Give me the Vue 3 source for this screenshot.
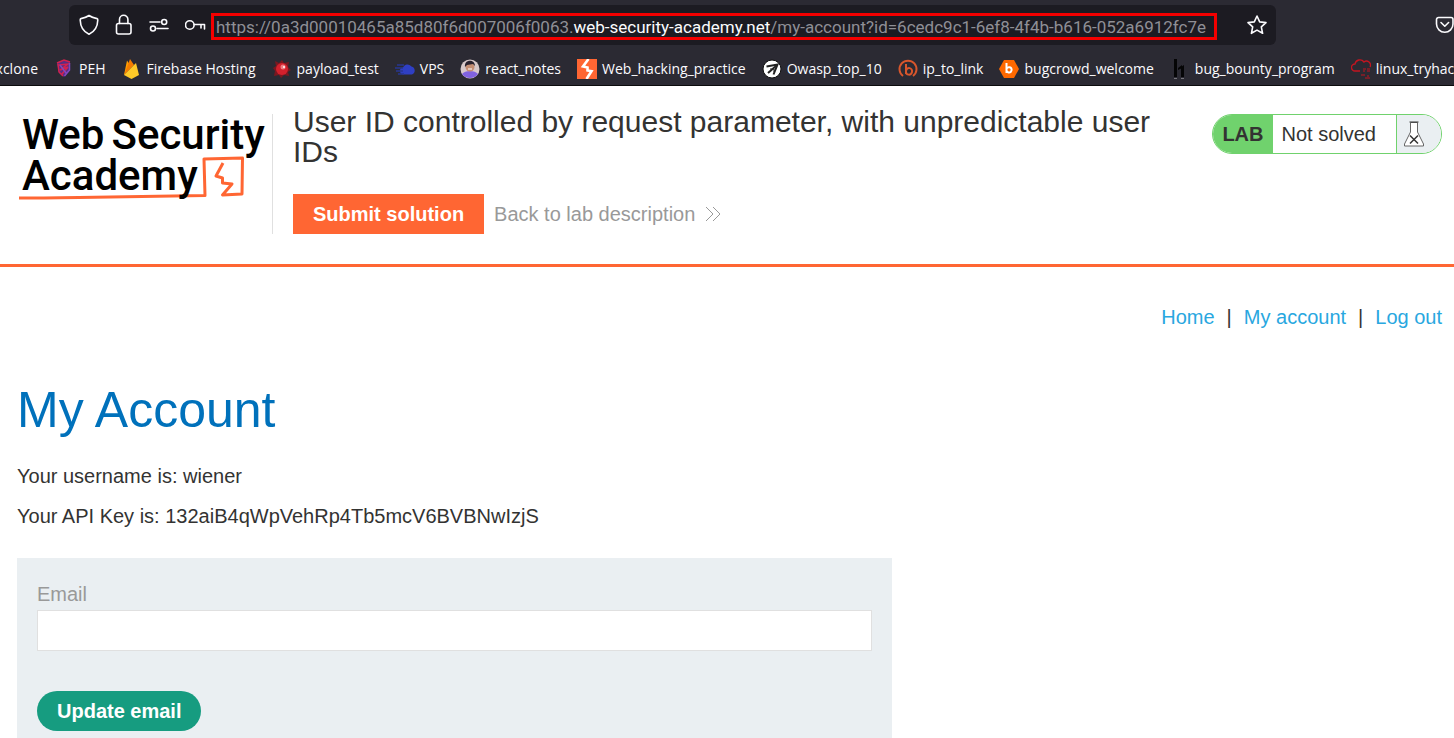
<script setup>
import { ref } from 'vue'

const email = ref('')

const bookmarks = [
  { icon: 'peh', label: 'PEH' },
  { icon: 'firebase', label: 'Firebase Hosting' },
  { icon: 'virus', label: 'payload_test' },
  { icon: 'cloud', label: 'VPS' },
  { icon: 'avatar', label: 'react_notes' },
  { icon: 'burp', label: 'Web_hacking_practice' },
  { icon: 'owasp', label: 'Owasp_top_10' },
  { icon: 'bitly', label: 'ip_to_link' },
  { icon: 'bugcrowd', label: 'bugcrowd_welcome' },
  { icon: 'hackerone', label: 'bug_bounty_program' },
  { icon: 'thm', label: 'linux_tryhackme' }
]
</script>

<template>
  <div class="window">
    <div class="chrome">
      <div class="toolbar">
        <div class="urlbar">
          <button class="tool" aria-label="Tracking protection">
            <svg width="20" height="22" viewBox="0 0 20 22"><path d="M10 1.5 C7.500 3.300 4.500 4.200 2 4.600 C1.300 4.800 1.200 5.200 1.200 6 C1.400 12.500 4 17.500 10 20.300 C16 17.500 18.600 12.500 18.800 6 C18.800 5.200 18.700 4.800 18 4.600 C15.500 4.200 12.500 3.300 10 1.500Z" /></svg>
          </button>
          <button class="tool" aria-label="Site security">
            <svg width="18" height="22" viewBox="0 0 18 22"><rect x="1.500" y="9.500" width="14.500" height="10.500" rx="2" /><path d="M4.500 9.500V5.500a4.200 4.200 0 0 1 8.400 0v4" /></svg>
          </button>
          <button class="tool" aria-label="Permissions">
            <svg width="20" height="14" viewBox="0 0 20 14"><path d="M1 4h10M8 10.500h11" /><circle cx="15.200" cy="4" r="2.500" /><circle cx="4" cy="10.500" r="2.500" /></svg>
          </button>
          <button class="tool" aria-label="Saved logins">
            <svg width="22" height="12" viewBox="0 0 22 12"><circle cx="4.800" cy="6" r="4.300" /><path d="M9.200 5.500h10.300v4.500M16 5.500v3.500" /></svg>
          </button>
          <div class="address" role="textbox" aria-label="Address">https://0a3d00010465a85d80f6d007006f0063.<span class="host">web-security-academy.net</span>/my-account?id=6cedc9c1-6ef8-4f4b-b616-052a6912fc7e</div>
          <button class="tool star" aria-label="Bookmark this page">
            <svg width="22" height="22" viewBox="0 0 22 22"><path d="M11 2l2.700 5.900 6.300.7-4.700 4.300 1.300 6.400L11 16.100l-5.600 3.200 1.300-6.400L2 8.600l6.300-.7z" /></svg>
          </button>
        </div>
        <button class="tool pocket" aria-label="Save to Pocket">
          <svg width="20" height="20" viewBox="0 0 20 20"><path d="M3.500 2.500h12.500a2 2 0 0 1 2 2v4.500a8.200 8.200 0 0 1-16.500 0V4.500a2 2 0 0 1 2-2z" /><path d="M6 7.500l3.800 3.700 3.800-3.700" /></svg>
        </button>
      </div>

      <nav class="bookmarks" aria-label="Bookmarks">
        <a href="#" class="bookmark first"><span>xclone</span></a>
        <a v-for="b in bookmarks" :key="b.label" href="#" class="bookmark">
          <svg class="favicon" width="20" height="20" viewBox="0 0 20 20" aria-hidden="true">
            <g v-if="b.icon === 'peh'">
              <path d="M3 4l7-3 6 2v8l-6 7-5-4z" fill="#5a2d83" />
              <path d="M3 4l7-3 6 2M4 5l1 8 4 4M5 6l9-1-8 6 8-3-6 7" fill="none" stroke="#d4214f" stroke-width="1.500" />
              <path d="M15.500 4v7l-5 6M6 6l6 8" fill="none" stroke="#8049c0" stroke-width="1.500" />
            </g>
            <g v-else-if="b.icon === 'firebase'">
              <path d="M2 16L5 1.500l4 6z" fill="#ffa000" /><path d="M2 16L8 0l4 6 2-2z" fill="#f57c00" /><path d="M2 16L14 4l3 12-7.500 4z" fill="#ffca28" />
            </g>
            <g v-else-if="b.icon === 'virus'">
              <path d="M3 2l4 2 3-3 2 3 5-1-1 5 3 3-3 2 1 4-5-1-3 3-2-3-5 1 1-5-2-3 3-2z" fill="#7b1820" />
              <circle cx="10" cy="10" r="6" fill="#d3202c" /><circle cx="11" cy="8" r="2.500" fill="#ef7b80" /><circle cx="12" cy="8" r="1" fill="#fff" />
            </g>
            <g v-else-if="b.icon === 'cloud'">
              <path d="M9 15.500a3.500 3.500 0 0 1-1-7 5 5 0 0 1 8.500-1 4.200 4.200 0 0 1 .5 8z" fill="#2f3fc4" /><path d="M2 6h7M0 9h8M1 12h7M3 15h6" stroke="#283792" stroke-width="1.500" />
            </g>
            <g v-else-if="b.icon === 'avatar'">
              <circle cx="10" cy="10" r="9.500" fill="#d7c8c9" /><path d="M2 15c3-4 13-4 16 0a10 10 0 0 1-16 0z" fill="#8062df" /><circle cx="10" cy="8" r="4.500" fill="#c58e73" /><path d="M5 8c-1-8 10-8 10-1l-2-2-6 1z" fill="#29212d" /><path d="M8 10h4" stroke="#fff" />
            </g>
            <g v-else-if="b.icon === 'burp'">
              <path d="M0 0h20v20H0z" fill="#ff6633" /><path d="M11.500 0L6 7.500l4.500 1V11.500l4 .7L9.500 20" fill="none" stroke="#fff" stroke-width="2.600" />
            </g>
            <g v-else-if="b.icon === 'owasp'">
              <circle cx="10" cy="10" r="9" fill="#fff" stroke="#111" /><path d="M4.500 7.500L15.500 5.500 11.500 15.500" fill="none" stroke="#222" stroke-width="2" /><path d="M14 7l-8 7" stroke="#222" stroke-width="2" /><path d="M8 10h4v3" fill="none" stroke="#222" />
            </g>
            <g v-else-if="b.icon === 'bitly'" fill="none" stroke="#d8562c" stroke-width="2">
              <path d="M5 17A8.500 8.500 0 1 1 15 17M8 5v10M8 12c1-5 7-3 6 1s-6 3-6 0" />
            </g>
            <g v-else-if="b.icon === 'bugcrowd'">
              <path d="M5 1h10l5 9-5 9H5l-5-9z" fill="#ff6900" /><path d="M7.500 4v10M7.500 10c1-3 6-2 5 1.500s-5 2-5-.5" fill="none" stroke="#fff" stroke-width="2" />
            </g>
            <g v-else-if="b.icon === 'hackerone'">
              <path d="M4 0h3v18H4zM11 8l3-2v12h-3zM8 9l4-3v3l-4 2z" fill="#050506" /><path d="M4 19.500h3m4 0h3" stroke="#77757b" />
            </g>
            <g v-else fill="none" stroke="#c31520" stroke-width="1.300">
              <path d="M9 12H4a3.200 3.200 0 0 1 0-7 5 5 0 0 1 9-2 4 4 0 0 1 6 5" /><path d="M12 10h3m1 0h3M12 12h2m2 0h3M10 16h4m2 1h2M14 19h5" stroke-width="1" />
            </g>
          </svg>
          <span>{{ b.label }}</span>
        </a>
      </nav>
    </div>

    <header class="lab-header">
      <a href="#" class="logo" aria-label="Web Security Academy">
        <svg class="underline" width="230" height="48" viewBox="0 0 230 48" aria-hidden="true">
          <path d="M0 42Q20 42 60 41.500T186 39.500L185 3 223.500 2 223 38 203.500 39 213 28 203.500 27V22L197 20 204 7" fill="none" stroke="#ff6633" stroke-width="3" stroke-linejoin="round" />
        </svg>
        <span class="logo-line"><span>Web</span><span>Security</span></span>
        <span class="logo-line"><span>Academy</span></span>
      </a>
      <div class="title-block">
        <h2>User ID controlled by request parameter, with unpredictable user IDs</h2>
        <div class="actions">
          <button class="submit">Submit solution</button>
          <a href="#" class="back">Back to lab description
            <svg width="16" height="16" viewBox="0 0 16 16" aria-hidden="true"><path d="M1 1l7 7-7 7M8 1l7 7-7 7" fill="none" stroke="#999" /></svg>
          </a>
        </div>
      </div>
      <div class="status">
        <strong>LAB</strong>
        <span class="state">Not solved</span>
        <span class="flask">
          <svg width="22" height="26" viewBox="0 0 22 26" aria-hidden="true">
            <path d="M7.500 1.500V11L1.500 23v2h19v-2l-6-12V1.500z" fill="#fff" stroke="#666" /><path d="M6.500 1h9" stroke="#333" /><path d="M7 14.500l8 8m0-8l-8 8" stroke="#333" stroke-width="1.500" />
          </svg>
        </span>
      </div>
    </header>

    <main>
      <nav class="account-nav" aria-label="Account">
        <a href="#">Home</a><span>|</span><a href="#">My account</a><span>|</span><a href="#">Log out</a>
      </nav>
      <h1>My Account</h1>
      <p>Your username is: wiener</p>
      <p>Your API Key is: 132aiB4qWpVehRp4Tb5mcV6BVBNwIzjS</p>
      <form @submit.prevent>
        <label for="email">Email</label>
        <input id="email" v-model="email" type="email">
        <button type="submit">Update email</button>
      </form>
    </main>
  </div>
</template>

<style>
body {
  margin: 0;
  background: #fff;
}
</style>

<style scoped>
* {
  box-sizing: border-box;
}
.window {
  height: 100vh;
  overflow: hidden;
  font: 20px/24px "Liberation Sans", Arial, sans-serif;
  color: #333332;
}
button {
  border: 0;
  padding: 0;
  font: inherit;
}
a {
  text-decoration: none;
}
.chrome {
  background: #2b2a33;
  border-bottom: 1px solid #0c0c0d;
  color: #fbfbfe;
  font-family: "Open Sans", "Noto Sans", sans-serif;
  overflow: hidden;
}
.toolbar {
  display: flex;
  align-items: center;
  height: 50px;
  padding-left: 69px;
}
.urlbar {
  display: flex;
  align-items: center;
  gap: 16px;
  flex: 1;
  height: 40px;
  margin-right: 159px;
  padding: 0 8px 0 10px;
  border-radius: 6px;
  background: #1c1b22;
}
.tool {
  display: flex;
  flex: none;
  background: none;
}
.tool svg {
  fill: none;
  stroke: #fbfbfe;
  stroke-width: 1.6;
  stroke-linecap: round;
  stroke-linejoin: round;
}
.address {
  flex: 1;
  height: 27px;
  margin: 3px 13px 0 -12px;
  padding: 0 6px 0 2px;
  border: 3px solid #f40000;
  font-family: Roboto, "Open Sans", sans-serif;
  font-size: 17px;
  line-height: 22px;
  white-space: nowrap;
  color: #8f8f96;
}
.host {
  color: #fbfbfe;
}
.pocket {
  margin-right: -1px;
}
.bookmarks {
  display: flex;
  align-items: center;
  gap: 16px;
  height: 35px;
  padding-top: 2px;
}
.bookmark {
  display: flex;
  align-items: center;
  gap: 5px;
  flex: none;
  color: #fbfbfe;
  font-size: 14px;
  line-height: 20px;
  white-space: nowrap;
}
.first {
  justify-content: flex-end;
  width: 38px;
}
.favicon {
  flex: none;
}
.lab-header {
  display: flex;
  align-items: flex-start;
  padding: 28px 12px 30px 19px;
  border-bottom: 3px solid #ff6633;
}
.logo {
  position: relative;
  flex: none;
  width: 254px;
  height: 120px;
  padding-left: 3px;
  border-right: 1px solid #e0e0e0;
  color: #000;
  font: 500 42px/41px Roboto, sans-serif;
}
.logo-line {
  position: relative;
  display: flex;
  gap: 7px;
}
.underline {
  position: absolute;
  left: 0;
  top: 42px;
}
.title-block {
  flex: 1;
  margin-top: -7px;
  padding-left: 20px;
}
h2 {
  max-width: 880px;
  margin: 0 0 27px;
  font-size: 30px;
  line-height: 30px;
  font-weight: 400;
}
.actions {
  display: flex;
  align-items: center;
  gap: 10px;
}
.submit {
  height: 40px;
  padding: 0 20px;
  background: #ff6633;
  color: #fff;
  font-weight: 700;
}
.back {
  display: flex;
  align-items: center;
  gap: 10px;
  color: #999;
}
.status {
  display: flex;
  flex: none;
  height: 40px;
  border: 1px solid #70d26d;
  border-radius: 20px;
  overflow: hidden;
  line-height: 38px;
}
.status strong {
  padding: 0 9px;
  background: #70d26d;
}
.state {
  padding: 0 20px 0 9px;
}
.flask {
  display: flex;
  align-items: center;
  width: 45px;
  padding-left: 6px;
  border-left: 1px solid #70d26d;
  background: #eaeff2;
}
main {
  padding: 38px 12px 0 17px;
}
.account-nav {
  display: flex;
  justify-content: flex-end;
  gap: 12px;
}
.account-nav a {
  color: #29a7df;
}
h1 {
  margin: 51px 0 24px;
  color: #0071bb;
  font-size: 50px;
  line-height: 60px;
  font-weight: 400;
}
p {
  margin: 0 0 16px;
}
form {
  display: flex;
  flex-direction: column;
  align-items: flex-start;
  max-width: 875px;
  margin-top: 30px;
  padding: 24px 20px 20px;
  background: #eaeff2;
}
label {
  color: #999;
}
form input {
  width: 100%;
  height: 41px;
  margin: 4px 0 40px;
  padding: 0 10px;
  border: 1px solid #e0e0e0;
  font: inherit;
}
form button {
  height: 40px;
  padding: 0 20px;
  border-radius: 20px;
  background: #169c80;
  color: #fff;
  font-weight: 700;
}
</style>
